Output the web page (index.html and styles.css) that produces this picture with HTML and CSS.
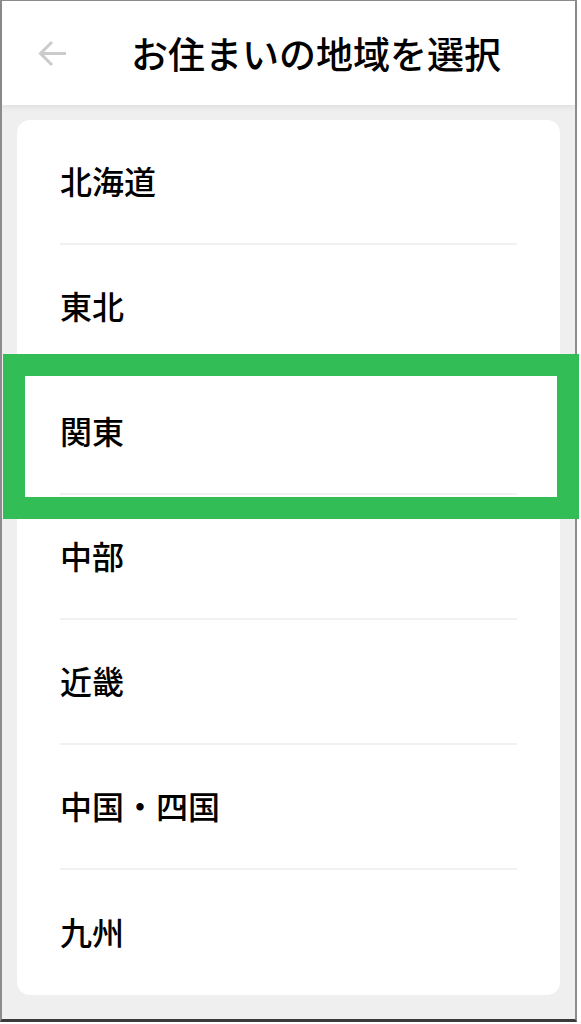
FILE: index.html
```html
<!DOCTYPE html>
<html lang="ja">
<head>
    <meta charset="UTF-8">
    <meta name="viewport" content="width=device-width, initial-scale=1.0">
    <title>お住まいの地域を選択</title>
    <link rel="stylesheet" href="styles.css">
</head>
<body>
    <div class="frame">
        <header class="header">
            <button class="back-btn" aria-label="戻る">
                <svg width="28" height="27" viewBox="0 0 28 27">
                    <path d="M28 13.5 H2.5 M14 2 L2.5 13.5 L14 25" fill="none" stroke="#cbcbcb" stroke-width="3"/>
                </svg>
            </button>
            <h1 class="title">お住まいの地域を選択</h1>
        </header>

        <main class="content">
            <ul class="region-list">
                <li class="region">北海道</li>
                <li class="region">東北</li>
                <li class="region">関東</li>
                <li class="region">中部</li>
                <li class="region">近畿</li>
                <li class="region">中国・四国</li>
                <li class="region">九州</li>
            </ul>
        </main>
    </div>

    <!-- 強調枠 -->
    <div class="highlight"></div>
</body>
</html>
```

FILE: styles.css
```css
body {
    margin: 0;
    background: #ffffff;
    font-family: "Noto Sans CJK JP", "Noto Sans", sans-serif;
    color: #111111;
}

.frame {
    width: 577px;
    height: 1022px;
    box-sizing: border-box;
    border: 2px solid #8c8c8c;
    border-top-width: 1px;
    border-bottom: 3px solid #3a3a3a;
    display: flex;
    flex-direction: column;
    background: #efefef;
}

.header {
    height: 104px;
    flex-shrink: 0;
    background: #ffffff;
    display: flex;
    align-items: center;
    padding-left: 36px;
    position: relative;
    z-index: 1;
    box-shadow: 0 2px 6px rgba(0, 0, 0, 0.07);
}

.back-btn {
    background: none;
    border: none;
    padding: 0;
    width: 28px;
    height: 27px;
    display: flex;
    cursor: pointer;
}

.title {
    margin: 0 0 0 65px;
    font-size: 37px;
    font-weight: 500;
    line-height: 1;
    color: #000000;
}

.content {
    flex: 1;
    padding: 15px 15px 24px;
}

.region-list {
    list-style: none;
    margin: 0;
    padding: 0;
    background: #ffffff;
    border-radius: 13px;
    height: 875px;
}

.region {
    height: 125px;
    box-sizing: border-box;
    padding-bottom: 3px;
    margin: 0 43px;
    display: flex;
    align-items: center;
    font-size: 32px;
    font-weight: 500;
    line-height: 1;
    color: #000000;
    border-bottom: 2px solid #f1f1f1;
}

.region:last-child {
    border-bottom: none;
}

.highlight {
    position: absolute;
    left: 3px;
    top: 354px;
    width: 576px;
    height: 165px;
    box-sizing: border-box;
    border: 22px solid #33bd56;
    pointer-events: none;
}
```
